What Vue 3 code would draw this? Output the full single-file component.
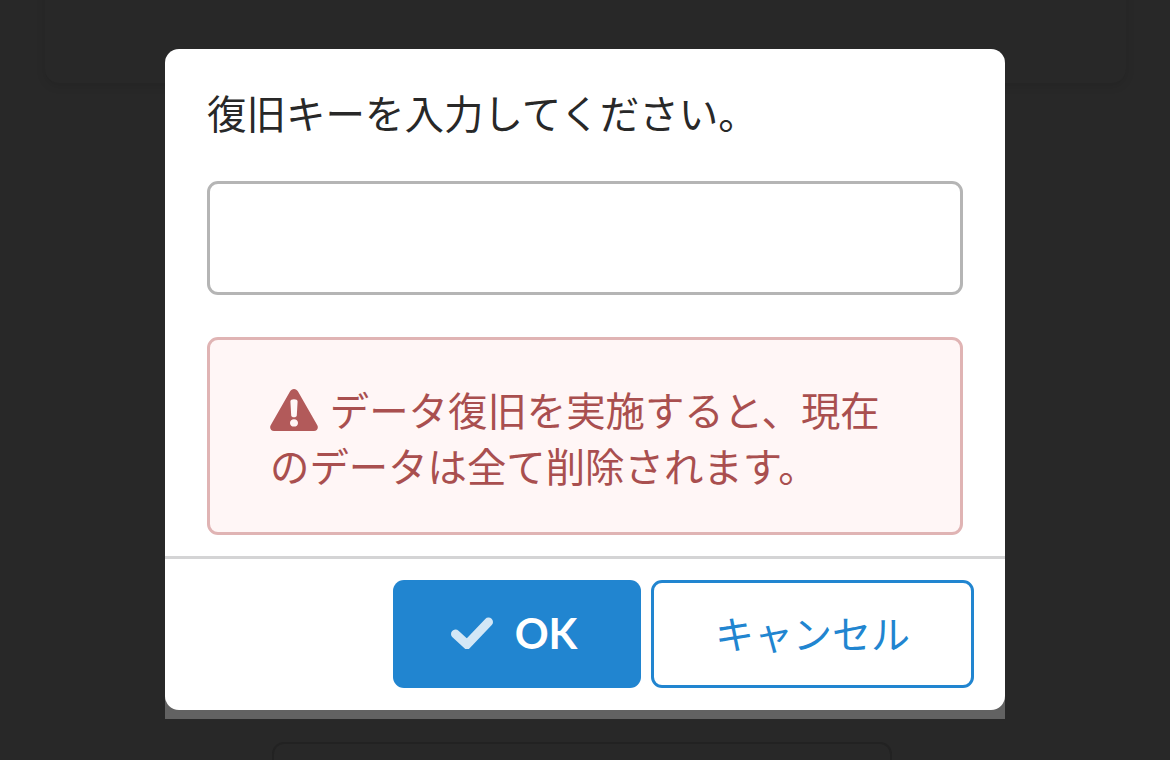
<script setup>
const title = '復旧キーを入力してください。';
const warning = 'データ復旧を実施すると、現在のデータは全て削除されます。';
</script>

<template>
  <div class="page">
    <div class="back-card"></div>
    <div class="back-box"></div>

    <div class="modal-wrap">
      <div class="modal">
        <div class="modal__content">
          <div class="modal__title">{{ title }}</div>
          <input class="modal__input" type="text" />
          <div class="modal__warning">
            <svg class="modal__warning-icon" viewBox="0 0 48 42" aria-hidden="true">
              <path
                fill-rule="evenodd"
                d="M24 0c1.700 0 3.100.9 4 2.400l19.300 33.800c1.500 2.700-.3 5.800-3.300 5.800H4c-3 0-4.800-3.100-3.300-5.800L20 2.400C20.900.9 22.300 0 24 0zm-3.600 12.500l.8 14c.1 1 1.200 1.800 2.800 1.800s2.700-.8 2.800-1.800l.8-14c.1-1.300-1.400-2.300-3.600-2.300s-3.700 1-3.600 2.300zM24 30.200c-2.300 0-4 1.600-4 3.700s1.700 3.700 4 3.700 4-1.600 4-3.700-1.700-3.700-4-3.700z"
              />
            </svg>
            {{ warning }}
          </div>
        </div>
        <div class="modal__actions">
          <button class="btn btn--primary" type="button">
            <svg class="btn__check" viewBox="0 0 42 32" aria-hidden="true">
              <path d="M4.500 17l11.500 10.500L37.500 5" />
            </svg>
            OK
          </button>
          <button class="btn btn--outline" type="button">キャンセル</button>
        </div>
      </div>
    </div>
  </div>
</template>

<style>
html,
body {
  margin: 0;
  background: #282828;
}
</style>

<style scoped>
.page {
  position: relative;
  width: 1170px;
  height: 760px;
  overflow: hidden;
  background: #282828;
  font-family: "Noto Sans CJK JP", "Noto Sans", sans-serif;
}

.back-card {
  height: 103px;
  margin: -20px 44px 0 45px;
  border-radius: 14px;
  background: #282828;
  box-shadow: 0 3px 10px rgba(0, 0, 0, 0.1);
}

.back-box {
  width: 620px;
  height: 60px;
  margin: 659px 0 0 272px;
  border: 2px solid #222;
  border-radius: 12px;
  box-sizing: border-box;
}

.modal-wrap {
  position: absolute;
  left: 165px;
  top: 49px;
  width: 840px;
  height: 670px;
}

.modal-wrap::after {
  content: "";
  position: absolute;
  left: 0;
  right: 0;
  bottom: 0;
  height: 30px;
  background: #626262;
}

.modal {
  position: relative;
  z-index: 1;
  height: 661px;
  box-sizing: border-box;
  border-radius: 14px;
  background: #fff;
  display: flex;
  flex-direction: column;
}

.modal__content {
  flex: 1;
  padding: 35px 42px 0;
  display: flex;
  flex-direction: column;
}

.modal__title {
  height: 56px;
  font-size: 39.5px;
  line-height: 56px;
  color: #282828;
  white-space: nowrap;
}

.modal__input {
  display: block;
  height: 114px;
  margin-top: 41px;
  box-sizing: border-box;
  border: 3px solid #b5b5b5;
  border-radius: 11px;
  background: #fff;
  outline: none;
}

.modal__warning {
  height: 198px;
  margin-top: 42px;
  padding: 41px 60px 0;
  box-sizing: border-box;
  border: 3px solid #e0b4b4;
  border-radius: 11px;
  background: #fff6f6;
  color: #a94f4f;
  font-size: 39.4px;
  line-height: 56px;
}

.modal__warning-icon {
  width: 48px;
  height: 42px;
  margin-right: 3px;
  fill: #b25a5a;
  vertical-align: -5px;
}

.modal__actions {
  height: 154px;
  padding: 21px 31px 0 0;
  box-sizing: border-box;
  border-top: 3px solid #d4d4d5;
  display: flex;
  justify-content: flex-end;
  align-items: flex-start;
  gap: 10px;
}

.btn {
  height: 108px;
  box-sizing: border-box;
  border-radius: 11px;
  font-family: inherit;
  cursor: pointer;
  display: flex;
  align-items: center;
  justify-content: center;
}

.btn--primary {
  width: 248px;
  padding: 0 6px 2px 0;
  border: none;
  background: #2185d0;
  color: #fff;
  gap: 22px;
  font-family: Lato, "Noto Sans", sans-serif;
  font-size: 42px;
  font-weight: 700;
}

.btn__check {
  width: 42px;
  height: 32px;
  fill: none;
  stroke: #d3e7f6;
  stroke-width: 9px;
  stroke-linecap: round;
}

.btn--outline {
  width: 323px;
  padding: 0 0 4px;
  border: 3px solid #2185d0;
  background: #fff;
  color: #2185d0;
  font-size: 39px;
}
</style>
